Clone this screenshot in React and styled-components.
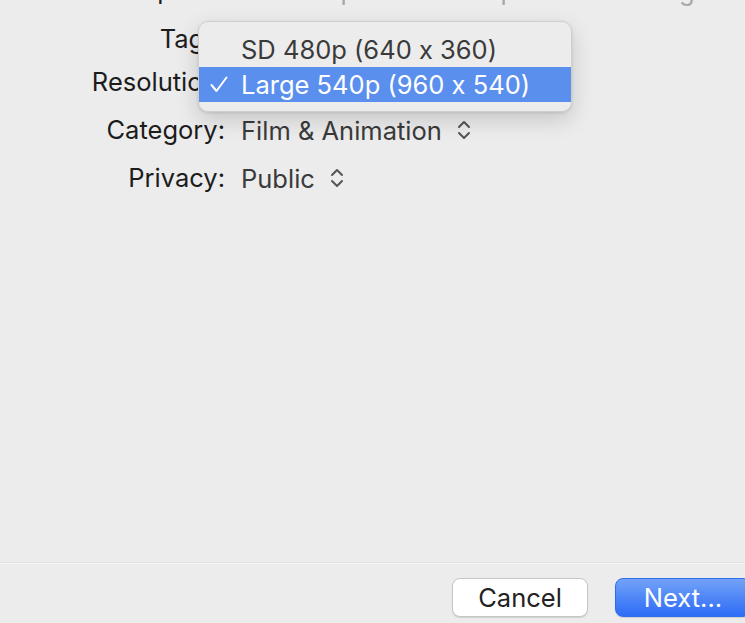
import React from "react";
import styled, { createGlobalStyle } from "styled-components";

const Global = createGlobalStyle`
  html, body {
    margin: 0;
    padding: 0;
    height: 100%;
    overflow: hidden;
    background: #ececec;
  }
  #root {
    height: 100%;
  }
`;

const Window = styled.div`
  height: 100vh;
  display: flex;
  flex-direction: column;
  font-family: Inter, "Noto Sans", sans-serif;
  font-feature-settings: "calt" 0;
  position: relative;
  overflow: hidden;
`;

const Form = styled.div`
  flex: 1;
  display: grid;
  grid-template-columns: 225px 1fr;
  column-gap: 16px;
  align-content: start;
  margin-top: -34px;
`;

const Label = styled.div`
  height: ${(p) => p.h}px;
  box-sizing: border-box;
  padding-top: ${(p) => p.pt || 0}px;
  line-height: ${(p) => p.h - (p.pt || 0)}px;
  text-align: right;
  font-size: 25.5px;
  color: #1c1c1c;
  white-space: nowrap;
`;

const Value = styled.div`
  height: ${(p) => p.h}px;
  display: flex;
  align-items: center;
  gap: 15px;
  font-size: 25.5px;
  color: ${(p) => (p.faint ? "#a8a8a8" : "#3a3a3a")};
  white-space: nowrap;
`;

const Footer = styled.div`
  height: 60px;
  border-top: 1px solid #f4f4f4;
  box-shadow: 0 -1px 0 #e4e4e4;
  display: flex;
  justify-content: flex-end;
  align-items: flex-start;
  gap: 27px;
  padding-top: 14px;
  margin-right: -6px;
  box-sizing: border-box;
`;

const Button = styled.button`
  width: 136px;
  height: 39px;
  border-radius: 8px;
  font-family: Inter, "Noto Sans", sans-serif;
  font-size: 25.5px;
  padding: 0;
  cursor: default;
  border: 1px solid ${(p) => (p.primary ? "#2f6df0" : "#c6c6c6")};
  background: ${(p) =>
    p.primary ? "linear-gradient(#72a2f8, #2d6cf6)" : "#ffffff"};
  color: ${(p) => (p.primary ? "#ffffff" : "#222222")};
  box-shadow: 0 1px 1px rgba(0, 0, 0, 0.12);
`;

const Menu = styled.div`
  position: absolute;
  left: 198px;
  top: 21px;
  width: 374px;
  padding: 10px 0 9px;
  background: #ececec;
  border: 1px solid #cfcfcf;
  border-radius: 10px;
  box-shadow: 0 8px 22px rgba(0, 0, 0, 0.16), 0 1px 3px rgba(0, 0, 0, 0.1);
  box-sizing: border-box;
  overflow: hidden;
`;

const MenuItem = styled.div`
  height: 35px;
  display: flex;
  align-items: center;
  padding-left: 42px;
  position: relative;
  font-size: 25.5px;
  background: ${(p) => (p.selected ? "#5a8fee" : "transparent")};
  color: ${(p) => (p.selected ? "#ffffff" : "#3a3a3a")};
`;

const Check = styled.svg`
  position: absolute;
  left: 11px;
  top: 9px;
`;

function Chevrons() {
  return (
    <svg width="14" height="22" viewBox="0 0 14 22" fill="none">
      <path
        d="M2 8 L7 3 L12 8 M2 14 L7 19 L12 14"
        stroke="#555"
        strokeWidth="2"
        strokeLinecap="round"
        strokeLinejoin="round"
      />
    </svg>
  );
}

export default function App() {
  return (
    <Window>
      <Global />
      <Form>
        <Label h={48}>Description:</Label>
        <Value h={48} faint>
          A description of the uploaded video goes here
        </Value>
        <Label h={44} pt={6}>
          Tags:
        </Label>
        <Value h={44} />
        <Label h={48}>Resolution:</Label>
        <Value h={48} />
        <Label h={48}>Category:</Label>
        <Value h={48}>
          Film &amp; Animation <Chevrons />
        </Value>
        <Label h={48}>Privacy:</Label>
        <Value h={48}>
          Public <Chevrons />
        </Value>
      </Form>
      <Footer>
        <Button>Cancel</Button>
        <Button primary>Next...</Button>
      </Footer>
      <Menu>
        <MenuItem>SD 480p (640 x 360)</MenuItem>
        <MenuItem selected>
          <Check width="18" height="17" viewBox="0 0 18 17" fill="none">
            <path
              d="M1.5 9 L6.5 15 L16.5 1.5"
              stroke="#fff"
              strokeWidth="2"
              strokeLinecap="round"
              strokeLinejoin="round"
            />
          </Check>
          Large 540p (960 x 540)
        </MenuItem>
      </Menu>
    </Window>
  );
}
